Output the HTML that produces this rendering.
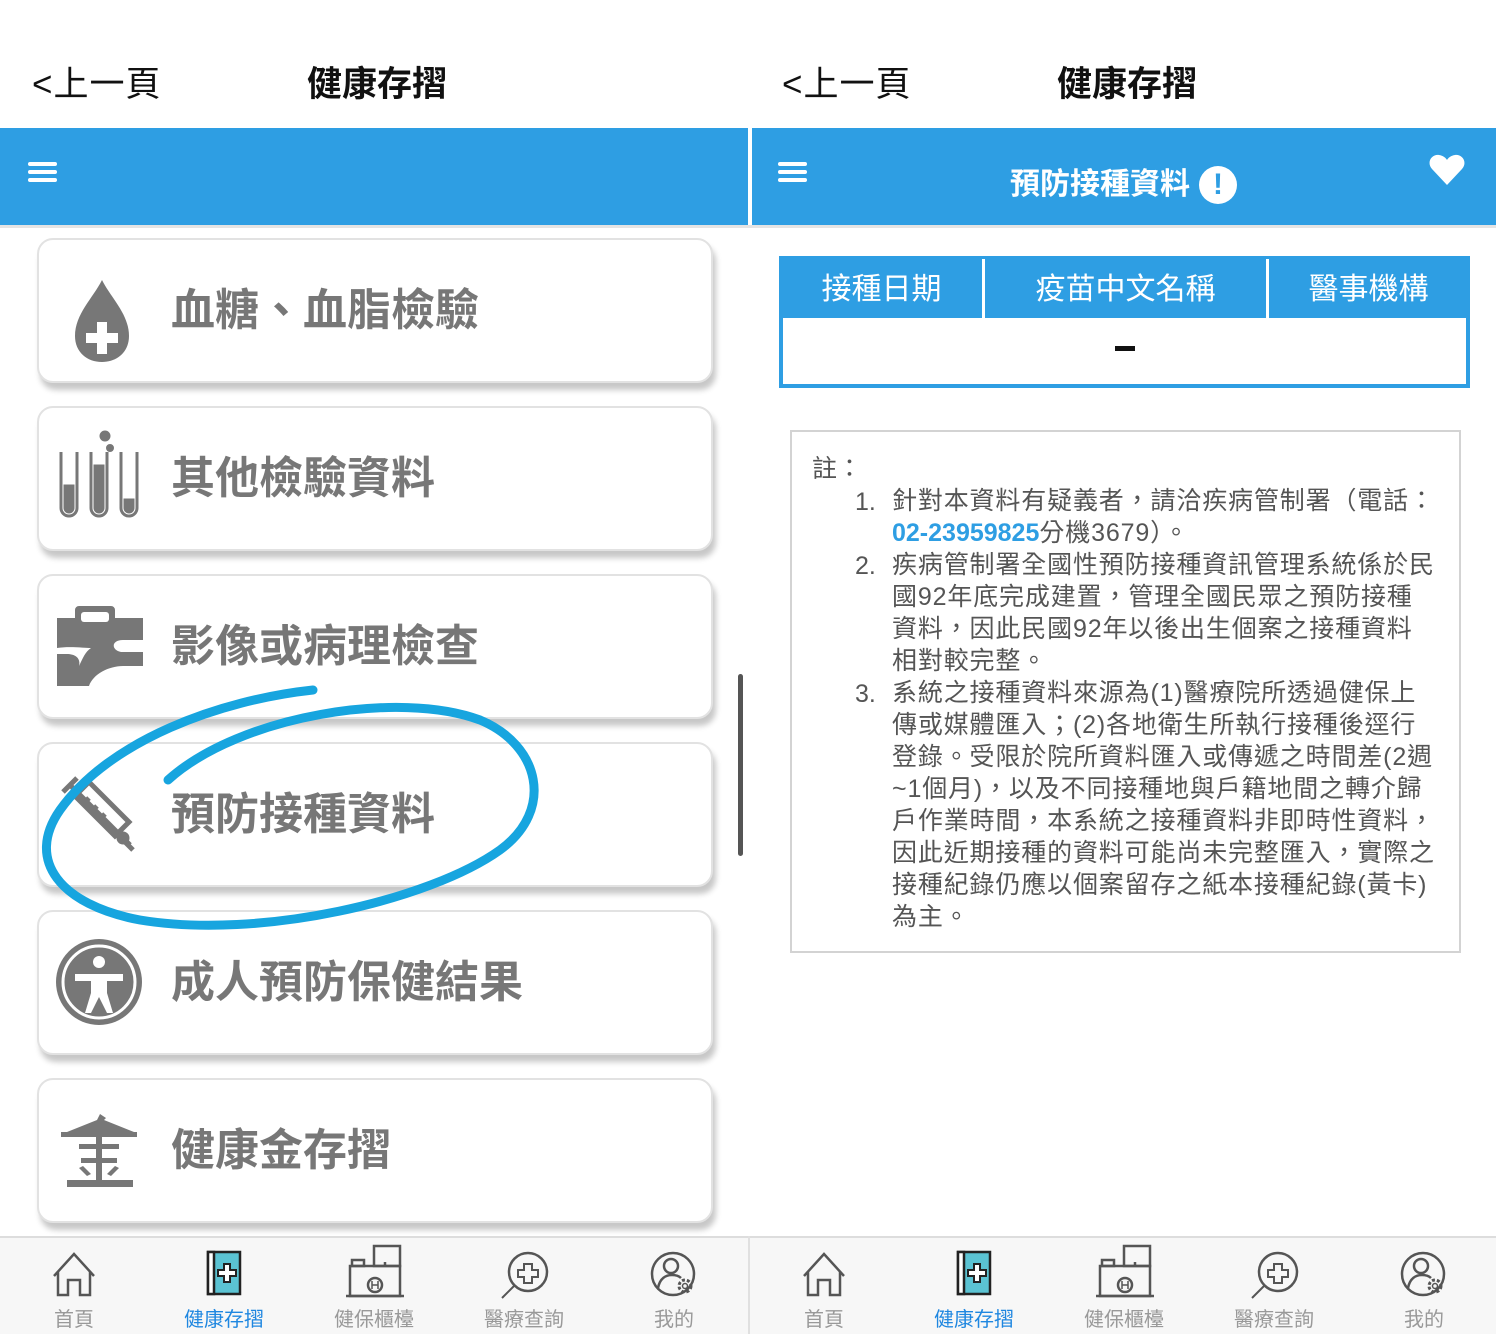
<!DOCTYPE html>
<html><head><meta charset="utf-8">
<style>
*{margin:0;padding:0;box-sizing:border-box}
body{width:1496px;height:1334px;position:relative;background:#fff;font-family:"Liberation Sans","Noto Sans CJK TC",sans-serif;overflow:hidden}
.abs{position:absolute}
.top{font-size:35px;color:#111;top:63px;line-height:44px}
.bar{position:absolute;top:128px;height:97px;background:#2e9ee3}
.ham{position:absolute;width:29px;height:4px;background:#fff;border-radius:2px}
.card{position:absolute;left:37px;width:676px;height:145px;background:#fff;border:2px solid #e2e2e2;border-radius:16px;box-shadow:3px 7px 6px rgba(0,0,0,.22)}
.card .t{position:absolute;left:132px;top:43px;font-size:44px;font-weight:bold;color:#777;line-height:56px}
.card svg{position:absolute;left:14px;top:18px}
.nav{position:absolute;top:1236px;height:98px;background:#f7f7f7;border-top:2px solid #ddd}
.ni{position:absolute;top:1304px;width:140px;margin-left:-70px;text-align:center;font-size:20px;color:#999;line-height:32px}
.ni.on{color:#1f87e0}
.notes{position:absolute;left:790px;top:430px;width:671px;height:523px;border:2px solid #d3d3d3;font-size:25px;color:#555;line-height:32px}
</style></head><body>

<div class="abs top" style="left:32px;letter-spacing:1px">&lt;上一頁</div>
<div class="abs top" style="left:307px;font-weight:bold">健康存摺</div>
<div class="abs top" style="left:782px;letter-spacing:1px">&lt;上一頁</div>
<div class="abs top" style="left:1057px;font-weight:bold">健康存摺</div>

<div class="bar" style="left:0;width:748px"></div>
<div class="bar" style="left:752px;width:744px"></div>
<div class="abs" style="left:0;top:225px;width:1496px;height:3px;background:#e4e4e4"></div>
<div class="ham" style="left:28px;top:162px"></div><div class="ham" style="left:28px;top:170px"></div><div class="ham" style="left:28px;top:178px"></div>
<div class="ham" style="left:778px;top:162px"></div><div class="ham" style="left:778px;top:170px"></div><div class="ham" style="left:778px;top:178px"></div>
<div class="abs" style="left:1010px;top:165px;font-size:30px;font-weight:bold;color:#fff;line-height:40px">預防接種資料</div>
<div class="abs" style="left:1199px;top:166px;width:38px;height:38px;border-radius:50%;background:#fff;color:#2e9ee3;font-weight:bold;font-size:30px;text-align:center;line-height:38px">!</div>
<svg class="abs" style="left:1428px;top:154px" width="38" height="32" viewBox="0 0 38 32"><path d="M19 31 L4 15 C-2 8 4 0 11 1 C15 1.5 18 4 19 6 C20 4 23 1.5 27 1 C34 0 40 8 34 15 Z" fill="#fff"/></svg>

<div class="card" style="top:238px"><svg width="100" height="110" viewBox="0 0 100 110"><path d="M49 22 C40 40 22 56 22 78 C22 94 34 104 49 104 C64 104 76 94 76 78 C76 56 58 40 49 22Z" fill="#777"/><path d="M44 64h10v11h11v10H54v11H44V85H33V75h11z" fill="#fff"/></svg><div class="t">血糖、血脂檢驗</div></div>
<div class="card" style="top:406px"><svg width="100" height="110" viewBox="0 0 100 110" fill="none" stroke="#777" stroke-width="3"><circle cx="52" cy="10" r="4" fill="#777"/><circle cx="57" cy="22" r="2.5" fill="#777"/><path d="M8 26v56a8 8 0 0 0 16 0V26M38 26v56a8 8 0 0 0 16 0V26M68 26v56a8 8 0 0 0 16 0V26"/><path d="M12 60v22a4 4 0 0 0 8 0V60z" fill="#777"/><path d="M42 40v42a4 4 0 0 0 8 0V40z" fill="#777"/><path d="M72 74v8a4 4 0 0 0 8 0v-8z" fill="#777"/></svg><div class="t">其他檢驗資料</div></div>
<div class="card" style="top:574px"><svg width="100" height="110" viewBox="0 0 100 110"><path d="M4 24h18v-8a4 4 0 0 1 4-4h32a4 4 0 0 1 4 4v8h28v22H70c-12 0-12 10-2 12h22v14H70c-14 0-30 8-34 20H4v-32h10c8 0 14 4 12 12 4-8 6-14 12-18-6 0-22-2-34 0z" fill="#777"/><rect x="28" y="18" width="28" height="10" rx="3" fill="#fff"/></svg><div class="t">影像或病理檢查</div></div>
<div class="card" style="top:742px"><svg width="100" height="110" viewBox="0 0 100 110" fill="none" stroke="#777" stroke-width="5"><path d="M10 30l14-14M17 23l60 60"/><path d="M22 34l14-14 40 40-8 8-6 6z"/><path d="M30 42l6-6M38 50l6-6M46 58l6-6"/><path d="M66 74l14 14" /><circle cx="70" cy="76" r="4"/></svg><div class="t">預防接種資料</div></div>
<div class="card" style="top:910px"><svg width="100" height="110" viewBox="0 0 100 110"><circle cx="46" cy="52" r="43" fill="#777"/><circle cx="46" cy="52" r="36" fill="none" stroke="#fff" stroke-width="3"/><circle cx="46" cy="32" r="6" fill="#fff"/><path d="M22 44h48v7H54v12l6 20h-6l-8-16-8 16h-6l6-20V51H22z" fill="#fff"/></svg><div class="t">成人預防保健結果</div></div>
<div class="card" style="top:1078px"><svg width="100" height="110" viewBox="0 0 100 110" fill="#777"><path d="M47 16l6 4-2 2 30 12H14l30-12z"/><rect x="8" y="34" width="76" height="5"/><rect x="26" y="46" width="40" height="5"/><rect x="43" y="38" width="6" height="44"/><rect x="28" y="60" width="36" height="5"/><path d="M30 68l8 8-4 2-8-8zM62 68l-8 8 4 2 8-8z"/><rect x="14" y="82" width="66" height="7"/></svg><div class="t">健康金存摺</div></div>

<div class="abs" style="left:738px;top:674px;width:5px;height:182px;background:#555;border-radius:3px"></div>

<svg class="abs" style="left:0;top:0" width="748" height="1334"><path d="M313 690 C220 700 110 740 60 810 C25 860 60 905 140 920 C260 940 430 900 500 850 C555 810 540 745 480 720 C400 690 240 715 168 780" fill="none" stroke="#17a5df" stroke-width="9" stroke-linecap="round"/></svg>

<div class="abs" style="left:779px;top:256px;width:691px;height:132px;border:4px solid #2e9ee3;border-top:none;background:#fff"></div>
<div class="abs" style="left:779px;top:256px;width:691px;height:62px;background:#2e9ee3"></div>
<div class="abs" style="left:982px;top:259px;width:3px;height:59px;background:#fff"></div>
<div class="abs" style="left:1266px;top:259px;width:3px;height:59px;background:#fff"></div>
<div class="abs" style="left:781px;top:270px;width:201px;text-align:center;color:#fff;font-size:30px;line-height:40px">接種日期</div>
<div class="abs" style="left:985px;top:270px;width:281px;text-align:center;color:#fff;font-size:30px;line-height:40px">疫苗中文名稱</div>
<div class="abs" style="left:1269px;top:270px;width:199px;text-align:center;color:#fff;font-size:30px;line-height:40px">醫事機構</div>
<div class="abs" style="left:1115px;top:346px;width:20px;height:5px;background:#111"></div>

<div class="notes">
<div class="abs" style="left:20px;top:21px">註：</div>
<div class="abs" style="left:63px;top:54px">1.</div>
<div class="abs" style="left:63px;top:118px">2.</div>
<div class="abs" style="left:63px;top:246px">3.</div>
<div class="abs" style="left:100px;top:53px;white-space:nowrap;letter-spacing:0.85px">針對本資料有疑義者，請洽疾病管制署（電話：<br><span style="color:#2e9ee3;font-weight:bold;letter-spacing:0">02-23959825</span>分機3679）。<br>疾病管制署全國性預防接種資訊管理系統係於民<br>國92年底完成建置，管理全國民眾之預防接種<br>資料，因此民國92年以後出生個案之接種資料<br>相對較完整。<br>系統之接種資料來源為(1)醫療院所透過健保上<br>傳或媒體匯入；(2)各地衛生所執行接種後逕行<br>登錄。受限於院所資料匯入或傳遞之時間差(2週<br>~1個月)，以及不同接種地與戶籍地間之轉介歸<br>戶作業時間，本系統之接種資料非即時性資料，<br>因此近期接種的資料可能尚未完整匯入，實際之<br>接種紀錄仍應以個案留存之紙本接種紀錄(黃卡)<br>為主。</div>
</div>

<div class="nav" style="left:0;width:748px"></div>
<div class="nav" style="left:750px;width:746px"></div>
<div class="abs" style="left:748px;top:1236px;width:2px;height:98px;background:#e0e0e0"></div>

<svg class="abs" style="left:0;top:1240px" width="1496" height="62" fill="none" stroke="#555" stroke-width="2.5">
<g id="g1">
<path d="M54 36 L74 14 L94 36 M58 32v23h10V40h12v15h10V32"/>
<rect x="208" y="12" width="32" height="42" fill="#5bc3d3" stroke="#222"/><rect x="208" y="12" width="6" height="42" fill="#fff" stroke="#222"/><path d="M224 24h6v6h6v6h-6v6h-6v-6h-6v-6h6z" fill="#fff" stroke="#222" stroke-width="2"/>
<rect x="350" y="26" width="50" height="30"/><rect x="352" y="20" width="12" height="6"/><rect x="374" y="6" width="26" height="20"/><path d="M385 26v-4M346 56h58"/><circle cx="375" cy="45" r="7"/><path d="M372 41v8M378 41v8M372 45h6" stroke-width="1.5"/>
<circle cx="528" cy="32" r="19"/><path d="M514 46l-12 12M524 24h8v6h6v7h-6v6h-8v-6h-6v-7h6z" stroke-width="2"/>
<circle cx="673" cy="34" r="21"/><circle cx="671" cy="26" r="7"/><path d="M658 48c2-10 8-13 14-13 4 0 7 1 9 3"/><circle cx="685" cy="46" r="6" stroke-width="3" stroke-dasharray="3 2"/><circle cx="685" cy="46" r="2.5" stroke-width="1.5"/>
</g>
<use href="#g1" x="750"/>
</svg>
<div class="ni" style="left:74px">首頁</div><div class="ni on" style="left:224px">健康存摺</div><div class="ni" style="left:374px">健保櫃檯</div><div class="ni" style="left:524px">醫療查詢</div><div class="ni" style="left:674px">我的</div>
<div class="ni" style="left:824px">首頁</div><div class="ni on" style="left:974px">健康存摺</div><div class="ni" style="left:1124px">健保櫃檯</div><div class="ni" style="left:1274px">醫療查詢</div><div class="ni" style="left:1424px">我的</div>
</body></html>
